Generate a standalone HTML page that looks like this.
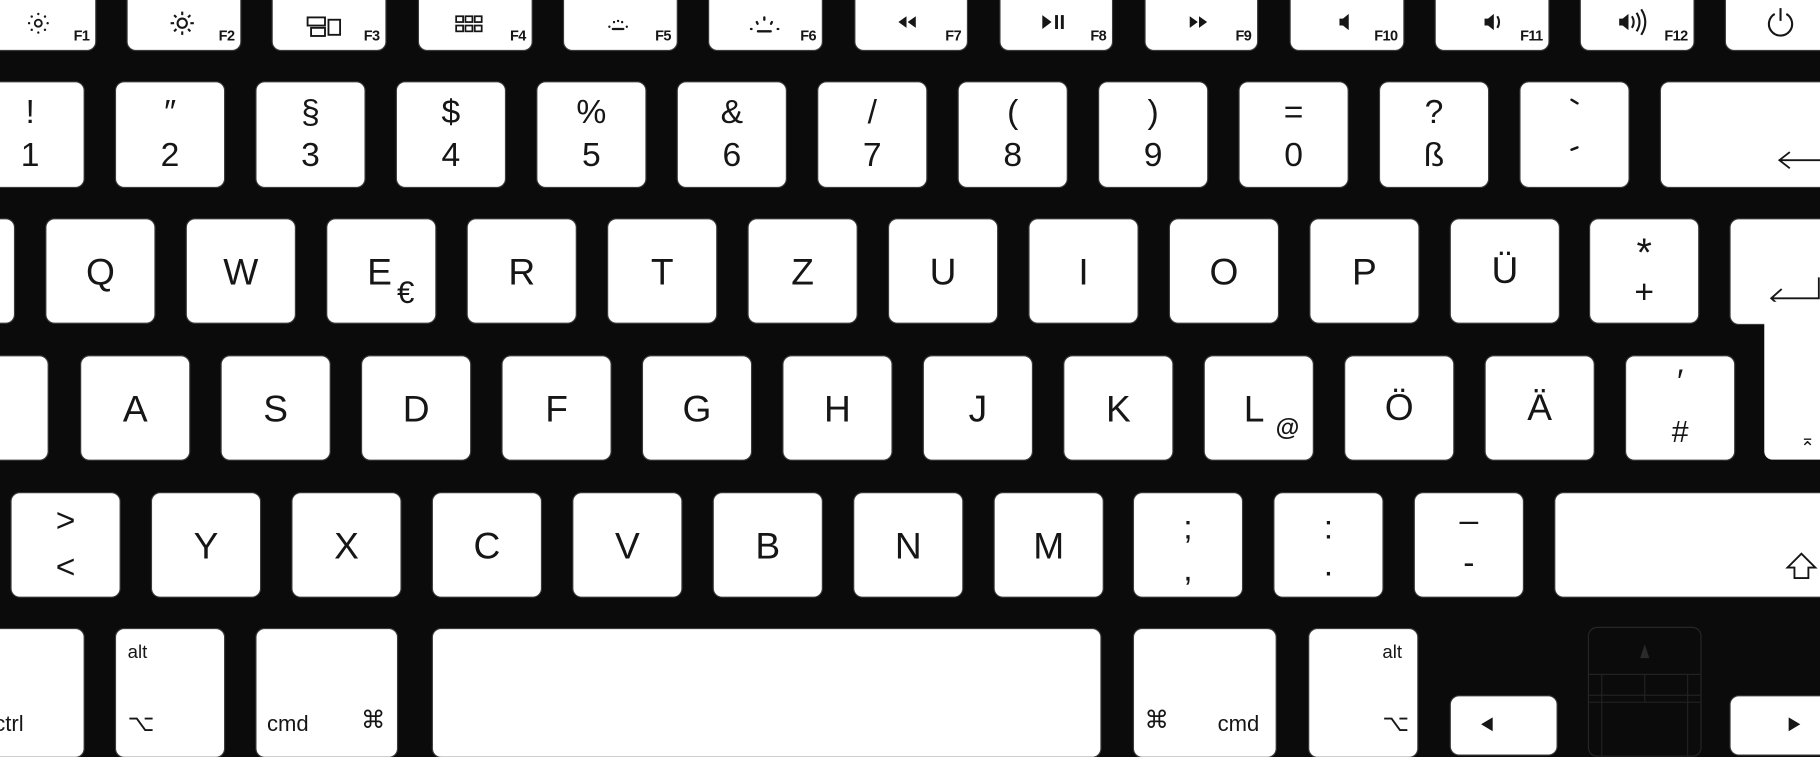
<!DOCTYPE html>
<html><head><meta charset="utf-8"><style>
html,body{margin:0;padding:0;background:#0b0b0b;width:1820px;height:730px;overflow:hidden}
.s{position:absolute;left:0;top:0;width:1568px;height:629px;transform:scale(1.16071);transform-origin:0 0;font-family:"Liberation Sans","DejaVu Sans",sans-serif;color:#161616}
.k{position:absolute;background:#fff;border-radius:7px;box-shadow:0 0 0 1px #3a3a3a}
.c{position:absolute;left:0;right:0;text-align:center;line-height:1}
.L{font-size:32px;top:29px}
.t{font-size:29px;top:12px}
.b{font-size:29px;top:49px}
.f{position:absolute;right:5px;bottom:5px;font-size:12.5px;font-weight:bold;letter-spacing:-0.5px}
.i{position:absolute;left:0;top:0}
.m{position:absolute;font-size:16px;line-height:1}
</style></head><body><div class="s">
<!-- F row -->
<div class="k" style="left:-20px;top:-10px;width:102px;height:53px"><svg class="i" width="102" height="53"><g transform="translate(53,30)" stroke="#161616" fill="none" stroke-width="1.6"><circle r="3"/><g stroke-width="2" stroke-linecap="round"><path d="M0 -8v0.1M0 8v0.1M-8 0h0.1M8 0h0.1M-5.7 -5.7h0.1M5.7 5.7h0.1M-5.7 5.7h0.1M5.7 -5.7h0.1"/></g></g></svg><span class="f">F1</span></div>
<div class="k" style="left:110px;top:-10px;width:97px;height:53px"><svg class="i" width="97" height="53"><g transform="translate(47,30)" stroke="#161616" fill="none" stroke-width="1.8"><circle r="4"/><path d="M0 -10v3M0 7v3M-10 0h3M7 0h3M-7 -7l2 2M5 5l2 2M-7 7l2-2M5 -5l2-2" stroke-width="1.8"/></g></svg><span class="f">F2</span></div>
<div class="k" style="left:235px;top:-10px;width:97px;height:53px"><svg class="i" width="97" height="53"><g stroke="#161616" fill="none" stroke-width="1.6"><rect x="30" y="25" width="15" height="7"/><rect x="33" y="34" width="12" height="7"/><rect x="48" y="27" width="10" height="13"/></g></svg><span class="f">F3</span></div>
<div class="k" style="left:361px;top:-10px;width:97px;height:53px"><svg class="i" width="97" height="53"><g stroke="#161616" fill="none" stroke-width="1.5"><rect x="32" y="24" width="6" height="5"/><rect x="40" y="24" width="6" height="5"/><rect x="48" y="24" width="6" height="5"/><rect x="32" y="32" width="6" height="5"/><rect x="40" y="32" width="6" height="5"/><rect x="48" y="32" width="6" height="5"/></g></svg><span class="f">F4</span></div>
<div class="k" style="left:486px;top:-10px;width:97px;height:53px"><svg class="i" width="97" height="53"><g stroke="#161616" stroke-width="2" stroke-linecap="round"><path d="M42 35h9"/><path d="M39 33v0.1M54 33v0.1M43 29v0.1M50 29v0.1M46.5 28v0.1"/></g></svg><span class="f">F5</span></div>
<div class="k" style="left:611px;top:-10px;width:97px;height:53px"><svg class="i" width="97" height="53"><g stroke="#161616" stroke-width="2" stroke-linecap="round"><path d="M42 37h11"/><path d="M36 35h0.5M59 35h0.5M41 29l0.7 1.5M54 29l-0.7 1.5M47.5 25v2"/></g></svg><span class="f">F6</span></div>
<div class="k" style="left:737px;top:-10px;width:96px;height:53px"><svg class="i" width="96" height="53"><path d="M37 29l7-5v10zM45 29l7-5v10z" fill="#161616"/></svg><span class="f">F7</span></div>
<div class="k" style="left:862px;top:-10px;width:96px;height:53px"><svg class="i" width="96" height="53"><path d="M36 23l8 6-8 6z" fill="#161616"/><rect x="47" y="23" width="2.5" height="12" fill="#161616"/><rect x="52" y="23" width="2.5" height="12" fill="#161616"/></svg><span class="f">F8</span></div>
<div class="k" style="left:987px;top:-10px;width:96px;height:53px"><svg class="i" width="96" height="53"><path d="M38 24l7 5-7 5zM46 24l7 5-7 5z" fill="#161616"/></svg><span class="f">F9</span></div>
<div class="k" style="left:1112px;top:-10px;width:97px;height:53px"><svg class="i" width="97" height="53"><path d="M42 26h3l5-4v14l-5-4h-3z" fill="#161616"/></svg><span class="f">F10</span></div>
<div class="k" style="left:1237px;top:-10px;width:97px;height:53px"><svg class="i" width="97" height="53"><path d="M42 26h3l5-4v14l-5-4h-3z" fill="#161616"/><path d="M53 24q3 5 0 10" stroke="#161616" stroke-width="1.8" fill="none"/></svg><span class="f">F11</span></div>
<div class="k" style="left:1362px;top:-10px;width:97px;height:53px"><svg class="i" width="97" height="53"><path d="M33 26h3l5-4v14l-5-4h-3z" fill="#161616"/><g stroke="#161616" stroke-width="1.8" fill="none"><path d="M44 24q3 5 0 10M48 21q5 8 0 16M52 18q7 11 0 22"/></g></svg><span class="f">F12</span></div>
<div class="k" style="left:1487px;top:-10px;width:100px;height:53px"><svg class="i" width="100" height="53"><g stroke="#161616" stroke-width="1.8" fill="none"><path d="M42 22a10 10 0 1 0 10 0"/><path d="M47 17v11"/></g></svg></div>
<!-- number row -->
<div class="k" style="left:-20px;top:71px;width:92px;height:90px"><div class="c t">!</div><div class="c b">1</div></div>
<div class="k" style="left:100px;top:71px;width:93px;height:90px"><div class="c t">″</div><div class="c b">2</div></div>
<div class="k" style="left:221px;top:71px;width:93px;height:90px"><div class="c t">§</div><div class="c b">3</div></div>
<div class="k" style="left:342px;top:71px;width:93px;height:90px"><div class="c t">$</div><div class="c b">4</div></div>
<div class="k" style="left:463px;top:71px;width:93px;height:90px"><div class="c t">%</div><div class="c b">5</div></div>
<div class="k" style="left:584px;top:71px;width:93px;height:90px"><div class="c t">&amp;</div><div class="c b">6</div></div>
<div class="k" style="left:705px;top:71px;width:93px;height:90px"><div class="c t">/</div><div class="c b">7</div></div>
<div class="k" style="left:826px;top:71px;width:93px;height:90px"><div class="c t">(</div><div class="c b">8</div></div>
<div class="k" style="left:947px;top:71px;width:93px;height:90px"><div class="c t">)</div><div class="c b">9</div></div>
<div class="k" style="left:1068px;top:71px;width:93px;height:90px"><div class="c t">=</div><div class="c b">0</div></div>
<div class="k" style="left:1189px;top:71px;width:93px;height:90px"><div class="c t">?</div><div class="c b">ß</div></div>
<div class="k" style="left:1310px;top:71px;width:93px;height:90px"><svg class="i" width="93" height="90"><path d="M44 15l5 3M44 58l5-2" stroke="#161616" stroke-width="2.2" stroke-linecap="round"/></svg></div>
<div class="k" style="left:1431px;top:71px;width:160px;height:90px"><svg class="i" width="160" height="90"><path d="M138 67h-36M111 60l-9 7 9 7" stroke="#161616" stroke-width="1.6" fill="none"/></svg></div>
<!-- Q row -->
<div class="k" style="left:-60px;top:189px;width:72px;height:89px"></div>
<div class="k" style="left:40px;top:189px;width:93px;height:89px"><div class="c L">Q</div></div>
<div class="k" style="left:161px;top:189px;width:93px;height:89px"><div class="c L">W</div></div>
<div class="k" style="left:282px;top:189px;width:93px;height:89px"><div class="c L" style="left:-3px">E</div><div style="position:absolute;left:60px;top:50px;font-size:27px;line-height:1">€</div></div>
<div class="k" style="left:403px;top:189px;width:93px;height:89px"><div class="c L">R</div></div>
<div class="k" style="left:524px;top:189px;width:93px;height:89px"><div class="c L">T</div></div>
<div class="k" style="left:645px;top:189px;width:93px;height:89px"><div class="c L">Z</div></div>
<div class="k" style="left:766px;top:189px;width:93px;height:89px"><div class="c L">U</div></div>
<div class="k" style="left:887px;top:189px;width:93px;height:89px"><div class="c L">I</div></div>
<div class="k" style="left:1008px;top:189px;width:93px;height:89px"><div class="c L">O</div></div>
<div class="k" style="left:1129px;top:189px;width:93px;height:89px"><div class="c L">P</div></div>
<div class="k" style="left:1250px;top:189px;width:93px;height:89px"><div class="c L" style="top:28px">Ü</div></div>
<div class="k" style="left:1370px;top:189px;width:93px;height:89px"><div class="c t" style="font-size:34px;top:12px">*</div><div class="c b" style="top:49px">+</div></div>
<div class="k" style="left:1491px;top:189px;width:100px;height:90px;border-radius:7px 0 0 7px"><svg class="i" width="100" height="90"><path d="M76 50v18h-41M44 60l-9 8 9 8" stroke="#161616" stroke-width="1.6" fill="none"/></svg></div>
<div class="k" style="left:1520px;top:260px;width:70px;height:136px;border-radius:0 0 0 7px;box-shadow:none"></div>
<!-- A row -->
<div class="k" style="left:-60px;top:307px;width:101px;height:89px"></div>
<div class="k" style="left:70px;top:307px;width:93px;height:89px"><div class="c L">A</div></div>
<div class="k" style="left:191px;top:307px;width:93px;height:89px"><div class="c L">S</div></div>
<div class="k" style="left:312px;top:307px;width:93px;height:89px"><div class="c L">D</div></div>
<div class="k" style="left:433px;top:307px;width:93px;height:89px"><div class="c L">F</div></div>
<div class="k" style="left:554px;top:307px;width:93px;height:89px"><div class="c L">G</div></div>
<div class="k" style="left:675px;top:307px;width:93px;height:89px"><div class="c L">H</div></div>
<div class="k" style="left:796px;top:307px;width:93px;height:89px"><div class="c L">J</div></div>
<div class="k" style="left:917px;top:307px;width:93px;height:89px"><div class="c L">K</div></div>
<div class="k" style="left:1038px;top:307px;width:93px;height:89px"><div class="c L" style="left:-8px">L</div><div style="position:absolute;left:61px;top:51px;font-size:21px;font-weight:bold;line-height:1">@</div></div>
<div class="k" style="left:1159px;top:307px;width:93px;height:89px"><div class="c L" style="top:28px">Ö</div></div>
<div class="k" style="left:1280px;top:307px;width:93px;height:89px"><div class="c L" style="top:28px">Ä</div></div>
<div class="k" style="left:1401px;top:307px;width:93px;height:89px"><div class="c t" style="top:8px">′</div><div class="c b" style="font-size:26px;top:52px">#</div></div>
<div style="position:absolute;left:1551px;top:372px;font-size:15px;line-height:1;color:#161616">⌅</div>
<!-- Y row -->
<div class="k" style="left:10px;top:425px;width:93px;height:89px"><div class="c t" style="top:10px">&gt;</div><div class="c b" style="top:50px">&lt;</div></div>
<div class="k" style="left:131px;top:425px;width:93px;height:89px"><div class="c L">Y</div></div>
<div class="k" style="left:252px;top:425px;width:93px;height:89px"><div class="c L">X</div></div>
<div class="k" style="left:373px;top:425px;width:93px;height:89px"><div class="c L">C</div></div>
<div class="k" style="left:494px;top:425px;width:93px;height:89px"><div class="c L">V</div></div>
<div class="k" style="left:615px;top:425px;width:93px;height:89px"><div class="c L">B</div></div>
<div class="k" style="left:736px;top:425px;width:93px;height:89px"><div class="c L">N</div></div>
<div class="k" style="left:857px;top:425px;width:93px;height:89px"><div class="c L">M</div></div>
<div class="k" style="left:977px;top:425px;width:93px;height:89px"><div class="c t" style="top:16px">;</div><div class="c b" style="top:52px">,</div></div>
<div class="k" style="left:1098px;top:425px;width:93px;height:89px"><div class="c t" style="top:16px">:</div><div class="c b" style="top:48px">.</div></div>
<div class="k" style="left:1219px;top:425px;width:93px;height:89px"><div class="c t" style="top:10px">–</div><div class="c b" style="top:46px">-</div></div>
<div class="k" style="left:1340px;top:425px;width:250px;height:89px"><svg class="i" width="250" height="89"><path d="M212 52l-12 12h6v9h12v-9h6z" stroke="#161616" stroke-width="1.6" fill="none"/></svg></div>
<!-- bottom row -->
<div class="k" style="left:-40px;top:542px;width:112px;height:110px"><div class="m" style="left:35px;top:73px;font-size:19px">ctrl</div></div>
<div class="k" style="left:100px;top:542px;width:93px;height:110px"><div class="m" style="left:10px;top:13px">alt</div><div class="m" style="left:10px;top:72px;font-size:20px">⌥</div></div>
<div class="k" style="left:221px;top:542px;width:121px;height:110px"><div class="m" style="left:9px;top:73px;font-size:19px">cmd</div><div class="m" style="left:90px;top:68px;font-size:21px">⌘</div></div>
<div class="k" style="left:373px;top:542px;width:575px;height:110px"></div>
<div class="k" style="left:977px;top:542px;width:122px;height:110px"><div class="m" style="left:9px;top:68px;font-size:21px">⌘</div><div class="m" style="left:72px;top:73px;font-size:19px">cmd</div></div>
<div class="k" style="left:1128px;top:542px;width:93px;height:110px"><div class="m" style="left:63px;top:13px">alt</div><div class="m" style="left:63px;top:72px;font-size:20px">⌥</div></div>
<div style="position:absolute;left:1368px;top:540px;width:96px;height:110px;border:1px solid #262626;border-radius:8px"><svg class="i" width="96" height="110"><path d="M48 14l-4 12h8z" fill="#2a2a2a"/><path d="M0 40h96M0 58h96M0 64h96M11 40v70M48 40v24M85 40v70" stroke="#222" stroke-width="1"/></svg></div>
<div class="k" style="left:1250px;top:600px;width:91px;height:50px"><svg class="i" width="91" height="50"><path d="M26 24l10-6v12z" fill="#161616"/></svg></div>
<div class="k" style="left:1491px;top:600px;width:100px;height:50px"><svg class="i" width="100" height="50"><path d="M50 18l10 6-10 6z" fill="#161616"/></svg></div>
</div></body></html>
